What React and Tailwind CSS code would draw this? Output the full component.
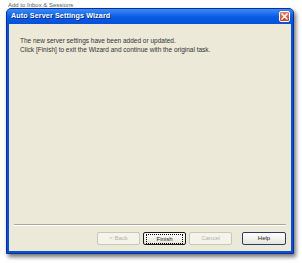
export default function App() {
  const buttons = [
    { label: '< Back', disabled: true },
    { label: 'Finish', focused: true },
    { label: 'Cancel', disabled: true },
  ]

  return (
    <div className="w-[302px] h-[263px] bg-white overflow-hidden font-['Liberation_Sans',Arial,sans-serif]">
      {/* Parent window peeking above */}
      <div className="h-[8px] overflow-hidden pl-[8px] pt-[2px]">
        <div className="text-[6px] leading-[7px] text-[#5a5a5a]">Add to Inbox &amp; Sessions</div>
      </div>

      {/* Dialog frame */}
      <div className="ml-[6px] w-[288px] h-[246px] rounded-t-[5px] bg-[#0b4fd6] border border-[#08309a] flex flex-col shadow-[2px_3px_4px_rgba(0,0,0,0.55)]">
        {/* Title bar */}
        <div className="h-[15px] flex items-center justify-between pl-[4px] pr-[3px] rounded-t-[4px] bg-gradient-to-b from-[#3c8cf6] via-[#0a5de6] to-[#0650d8]">
          <span className="text-[7.2px] font-bold text-white tracking-[0.1px] [text-shadow:1px_1px_0_#0a2a80]">Auto Server Settings Wizard</span>
          <div className="w-[11px] h-[11px] rounded-[2px] border border-white bg-gradient-to-b from-[#e8856a] to-[#c8401c] flex items-center justify-center">
            <svg width="7" height="7" viewBox="0 0 7 7">
              <path d="M1 1 L6 6 M6 1 L1 6" stroke="white" strokeWidth="1.5" strokeLinecap="square" />
            </svg>
          </div>
        </div>

        {/* Body */}
        <div className="flex-1 mx-[2px] mb-[2px] bg-[#ece9d8] flex flex-col">
          <div className="pt-[12px] pl-[11px] text-[6.5px] leading-[9px] text-[#333]">
            <p>The new server settings have been added or updated.</p>
            <p>Click [Finish] to exit the Wizard and continue with the original task.</p>
          </div>

          <div className="mt-auto mx-[5px] border-t border-[#aca899] border-b border-b-white" />

          <div className="flex justify-end pr-[5px] pt-[6px] pb-[6px]">
            <div className="flex gap-[3px]">
              {buttons.map(b => (
                <div
                  key={b.label}
                  className={`w-[43px] h-[13px] rounded-[2px] flex items-center justify-center text-[6px] ${
                    b.disabled
                      ? 'border border-[#c9c7ba] bg-[#f5f4ea] text-[#b5b2a4]'
                      : 'border border-[#1c1c1c] bg-gradient-to-b from-white to-[#e6e4dc] text-[#222]'
                  }`}
                >
                  {b.focused ? (
                    <span className="px-[9px] border border-dotted border-black leading-[8px]">{b.label}</span>
                  ) : (
                    b.label
                  )}
                </div>
              ))}
            </div>
            <div className="ml-[10px] w-[44px] h-[13px] rounded-[2px] border border-[#2a3a6a] bg-gradient-to-b from-white to-[#e6e4dc] flex items-center justify-center text-[6px] text-[#222]">
              Help
            </div>
          </div>
        </div>
      </div>
    </div>
  )
}
